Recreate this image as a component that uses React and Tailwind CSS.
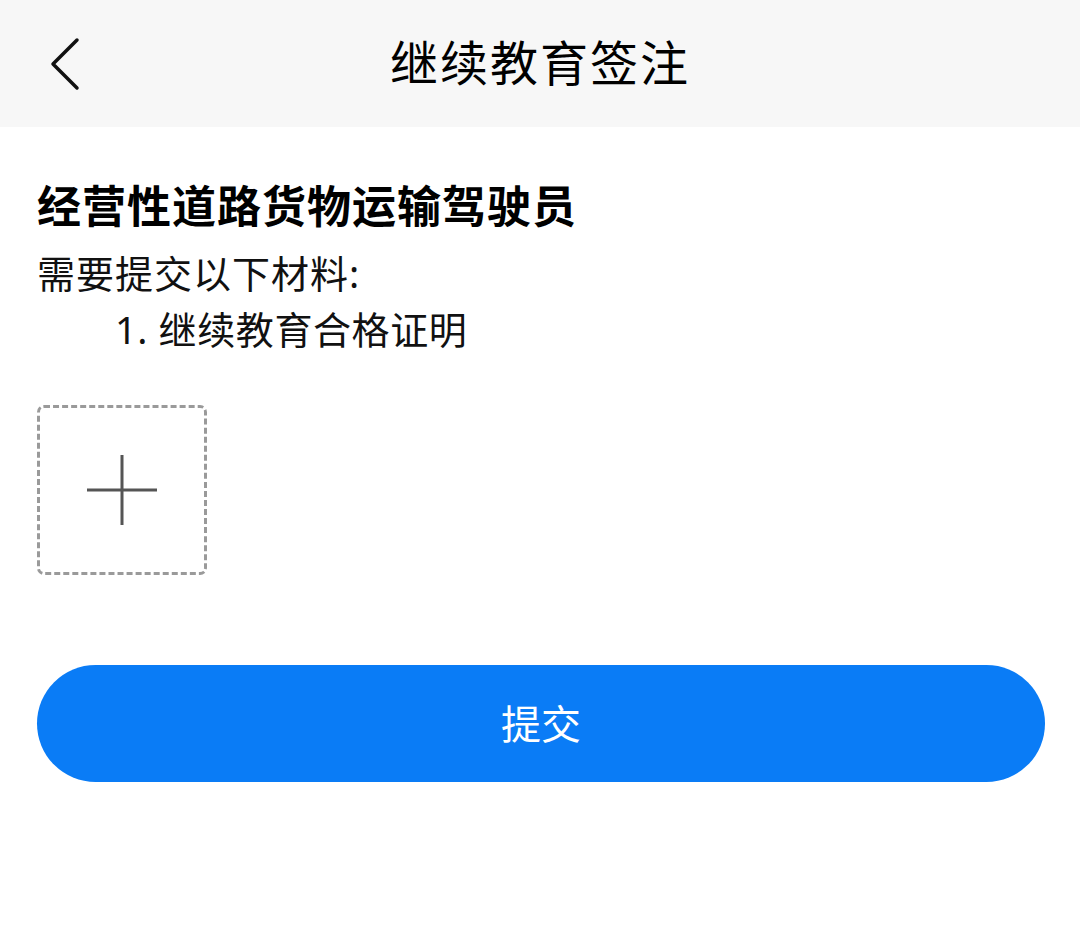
import React from "react";

const materials = ["继续教育合格证明"];

const App = () => {
  return (
    <div
      className="w-[1080px] h-[947px] bg-white text-black"
      style={{ fontFamily: '"Noto Sans", "Noto Sans CJK SC", sans-serif' }}
    >
      <header className="relative h-[127px] bg-[#f7f7f7] flex items-center justify-center">
        <button className="absolute left-[44px] top-[36px] w-[40px] h-[56px] flex items-center justify-center">
          <svg width="34" height="54" viewBox="0 0 34 54" fill="none">
            <path d="M30 3 L6 27 L30 51" stroke="#111" strokeWidth="3.5" strokeLinecap="round" strokeLinejoin="round" />
          </svg>
        </button>
        <h1 className="text-[48px] leading-none tracking-[2px] -mt-[2px]">继续教育签注</h1>
      </header>

      <main className="px-[37px] pt-[57px]">
        <h2 className="text-[44px] font-bold leading-none tracking-[1px]">经营性道路货物运输驾驶员</h2>
        <p className="mt-[16px] text-[38px] leading-[58px] tracking-[1px] text-[#111]">需要提交以下材料:</p>
        <div className="-mt-[2px]">
          {materials.map((item, i) => (
            <p key={item} className="pl-[78px] text-[38px] leading-[58px] tracking-[0.6px] text-[#111]">
              {i + 1}. {item}
            </p>
          ))}
        </div>

        <div className="mt-[47px] w-[170px] h-[170px] rounded-[7px] border-[3px] border-dashed border-[#9a9a9a] flex items-center justify-center">
          <svg width="70" height="70" viewBox="0 0 70 70">
            <path d="M35 0 V70 M0 35 H70" stroke="#555" strokeWidth="3" />
          </svg>
        </div>

        <button className="mt-[90px] w-[1008px] h-[117px] rounded-full bg-[#0a7cf6] text-white text-[40px] flex items-center justify-center">
          提交
        </button>
      </main>
    </div>
  );
};

export default App;
